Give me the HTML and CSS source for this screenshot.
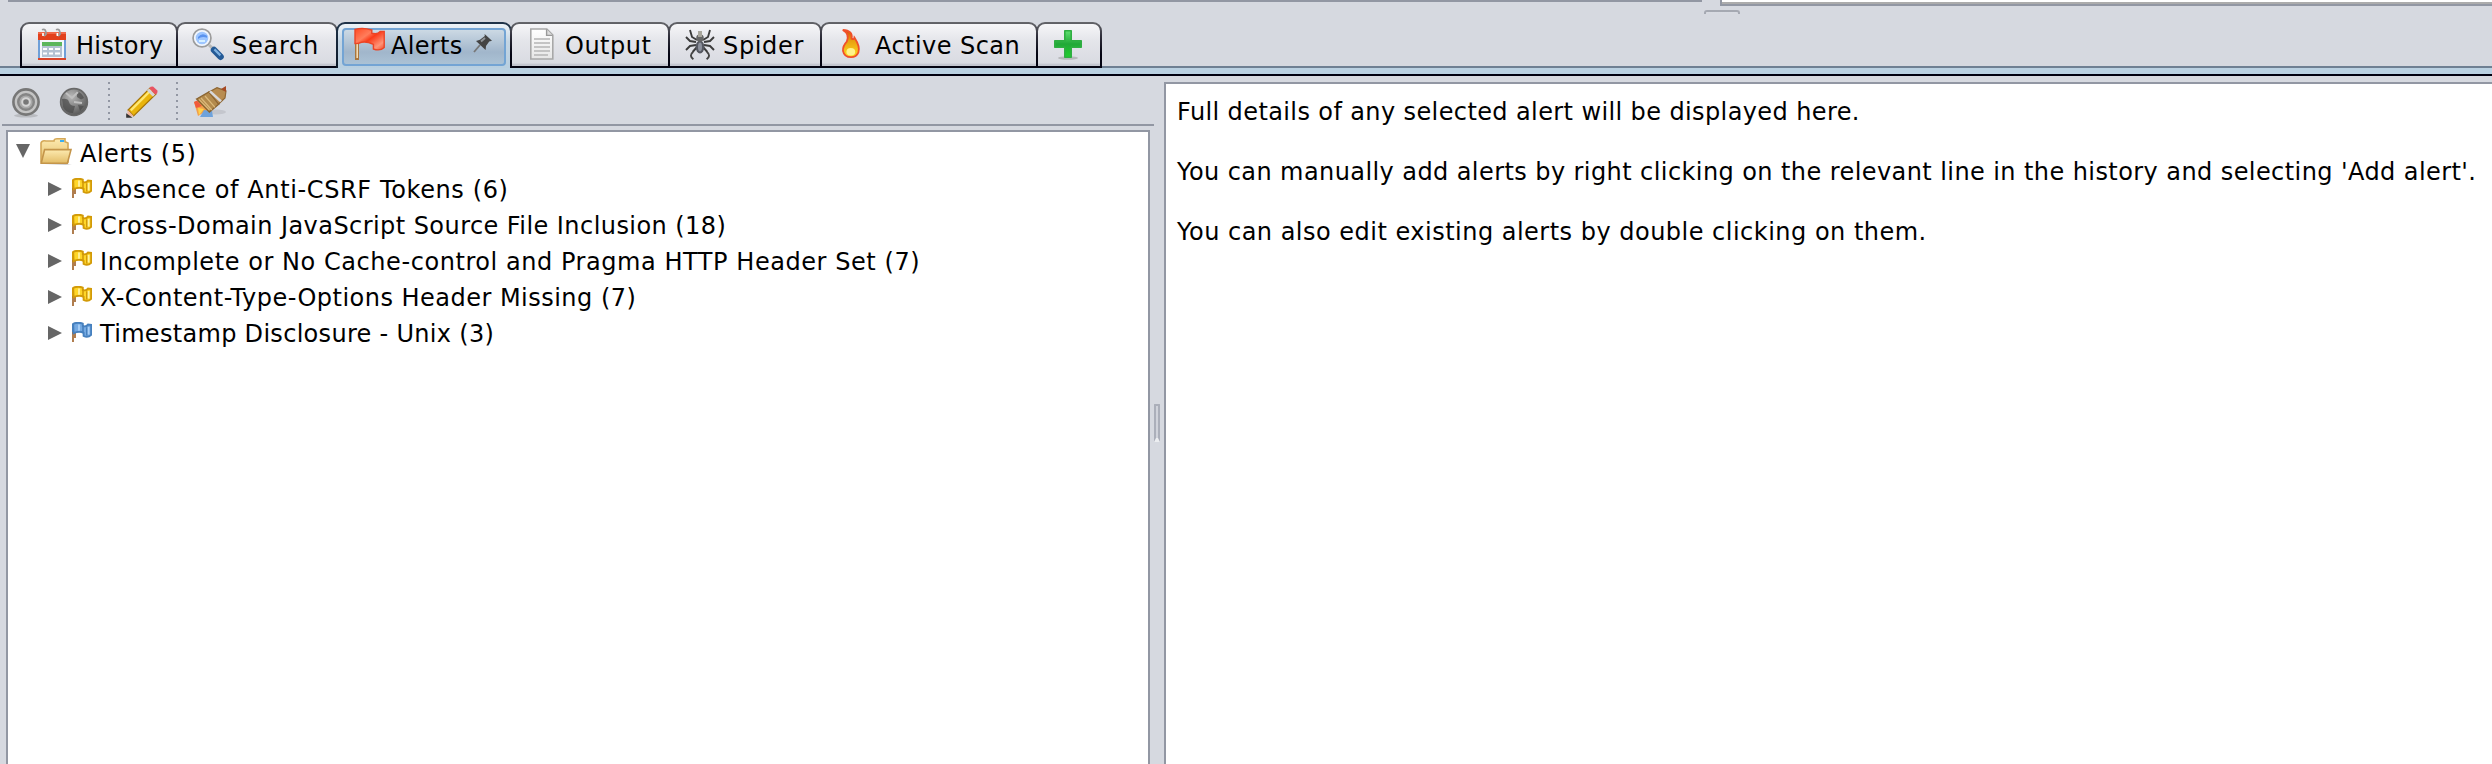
FILE: index.html
```html
<!DOCTYPE html>
<html lang="en">
<head>
<meta charset="utf-8">
<title>Alerts</title>
<link rel="stylesheet" href="styles.css">
</head>
<body>
<svg class="defs" aria-hidden="true">
  <defs>
    <linearGradient id="red" x1="0" y1="0" x2="1" y2="1"><stop offset="0" stop-color="#ff4a22"/><stop offset=".35" stop-color="#ff7d5c"/><stop offset=".5" stop-color="#fa3c1a"/><stop offset=".8" stop-color="#ff9478"/><stop offset="1" stop-color="#f04a28"/></linearGradient>
    <linearGradient id="fold" x1="0" y1="0" x2="0" y2="1"><stop offset="0" stop-color="#fdeab0"/><stop offset="1" stop-color="#e3bd68"/></linearGradient>
    <linearGradient id="flame" x1="0" y1="0" x2="0" y2="1"><stop offset="0" stop-color="#d84a08"/><stop offset=".4" stop-color="#e8a010"/><stop offset="1" stop-color="#ffdc20"/></linearGradient>
    <linearGradient id="green" x1="0" y1="0" x2="0" y2="1"><stop offset="0" stop-color="#5fe070"/><stop offset=".5" stop-color="#22a838"/><stop offset="1" stop-color="#1fd02c"/></linearGradient>
    <linearGradient id="page" x1="0" y1="0" x2="0" y2="1"><stop offset="0" stop-color="#fff"/><stop offset="1" stop-color="#e6e6e6"/></linearGradient>
    <radialGradient id="globe" cx=".4" cy=".3" r=".7"><stop offset="0" stop-color="#b8b8b8"/><stop offset="1" stop-color="#5a5a5a"/></radialGradient>
    <symbol id="flag" viewBox="0 0 10 10">
      <path d="M.5 1v5" stroke="var(--edge)"/>
      <path d="M.5 5v5M1.500 5v3" stroke="#a8703c" stroke-width=".9"/>
      <path d="M.6.9Q3-.1 5.400.8V2q1.600.6 2.600-.7l1.600.1V6.400Q8 8 5.800 7V5.400Q3.500 4.300.8 5.600z" fill="var(--lite)" stroke="var(--edge)" stroke-width=".95"/>
      <path d="M5.500 1.500V5.600M7.400 2.600V6.700" stroke="var(--edge)" stroke-width=".8"/>
      <path d="M3.500 1.200v3.200M8.300 2.500v3.700" stroke="var(--mid)" stroke-width=".9"/>
    </symbol>
  </defs>
</svg>
<div class="window">
  <div class="upper">
    <div class="upper-left"></div>
    <div class="upper-grip"></div>
    <div class="upper-right"></div>
  </div>

  <nav class="tabs">
    <div class="tab history">
      <svg class="icon" viewBox="0 0 16 16"><path d="M1 3h14v13H1z" fill="#6f9fd8"/><path d="M2 6h12v9H2z" fill="#f4f7fb"/><path d="M1 2h14v4H1z" fill="#e2401c"/><path d="M1 2h14v1H1z" fill="#f0694a"/><path d="M1 15h14v1H1z" fill="#d9452a"/><path d="M3 7h10v7.500H3z" fill="#b4c2d2"/><path d="M3 7h10v2H3z" fill="#5cb65c"/><path d="M3.500 10h2v1h-2zm3 0h2v1h-2zm3 0h2.500v1H9.500zM3.500 12.200h2v1h-2zm3 0h2v1h-2zm3 0h2.500v1H9.500z" fill="#fff"/><path d="M3 .9q2-1 2 2.200q-1 1.400-1.600-.2M10 .9q2-1 2 2.200q-1 1.400-1.600-.2" fill="none" stroke="#999" stroke-width=".9"/><path d="M3.500 2.500v1.500M10.700 2.500v1.500" stroke="#fff" stroke-width=".8"/></svg>
      <span>History</span>
    </div>
    <div class="tab search">
      <svg class="icon" viewBox="0 0 16 16"><path d="m8.500 8.500 2.500 2.300" stroke="#b9b9b9" stroke-width="1.500"/><path d="m11 11 3.300 3.400" stroke="#245a96" stroke-width="3.200" stroke-linecap="round"/><path d="m11.200 10.700 3 3" stroke="#7db0e0" stroke-width="1.100"/><circle cx="5" cy="5" r="4.400" fill="#a9cbfb" stroke="#9c9c9c"/><circle cx="5" cy="5" r="3.600" fill="#9ec6ff" stroke="#f2f6fc" stroke-width=".9"/><path d="M3 4.500q2-2.400 4.500-.6v1Q5 3.800 3 5.500z" fill="#5a92ee"/><path d="M3.500 6.500h3" stroke="#d6f0ff"/></svg>
      <span>Search</span>
    </div>
    <div class="tab alerts active">
      <div class="focus">
        <svg class="icon" viewBox="0 0 16 16"><path d="M1 5h2v11H1z" fill="#a9753c"/><path d="M1.700 6h.8v9h-.8z" fill="#f3dcb4"/><path d="M1 .7Q5-.3 9.400 1v1.600q3 .8 4.200-.9h2v8q-2 2-5.400.8V8.200Q6 6.200 3 7.600L1 7.800z" fill="url(#red)" stroke="#ec4425" stroke-width=".7"/></svg>
        <span>Alerts</span>
        <svg class="pin" viewBox="0 0 9 9"><path d="M0 9 3 5.500" stroke="#777" stroke-width=".9"/><path d="m1 3.500 2-.6L5.400 1 5.300 0 9 3.400 7.600 3.700 6 6l-.2 2z" fill="#444"/><path d="m3.500 3.700 2-1.700" stroke="#909498"/></svg>
      </div>
    </div>
    <div class="tab output">
      <svg class="icon" viewBox="0 0 16 16"><path d="M2.400.5h8l3 3v12h-11z" fill="url(#page)" stroke="#a8a8a8" stroke-width=".8"/><path d="M10.300.6v3.100h3" fill="#ddd" stroke="#999" stroke-width=".7"/><path d="M4 5.500h8M4 7.500h8M4 9.500h8M4 11.500h8M4 13.500h7" stroke="#b5b5b5" stroke-width=".8"/></svg>
      <span>Output</span>
    </div>
    <div class="tab spider">
      <svg class="icon" viewBox="0 0 16 16"><path d="M6.500 6 4 4.500 3 1M6 7 3 6.500 1 4.500M6 8.500 3 9 1 11M6.500 9.500 4.300 12M9.500 6 12 4.500 13 1M10 7l3-.5 2-2M10 8.500 13 9l2 2M9.500 9.500 11.700 12" fill="none" stroke="#3c3c3c" stroke-width=".95"/><path d="M4.500 12q-2.200 1.800.2 3.600M11.500 12q2.200 1.800-.2 3.600" fill="none" stroke="#444" stroke-width=".95"/><ellipse cx="8" cy="9.500" rx="2.200" ry="3.200" fill="#555861"/><ellipse cx="8" cy="9.500" rx="1" ry="2.200" fill="#8c909c"/><circle cx="8" cy="5" r="1.900" fill="#666"/><path d="M7 1.500h2v3H7z" fill="#a8a69c"/></svg>
      <span>Spider</span>
    </div>
    <div class="tab scan">
      <svg class="icon" viewBox="0 0 16 16"><path d="M3.400 1q5.200.3 4.400 4.300Q9 6 9.200 4.800q3 4.600 2 7.400-1 2.400-3.600 2.400-3.500 0-4.100-3.200-.2-2.400 1.900-4.600Q7 3 3.400 1z" fill="url(#flame)" stroke="#f0502a" stroke-width=".9"/><ellipse cx="7.400" cy="11.900" rx="2.200" ry="1.900" fill="#fff38c"/></svg>
      <span>Active Scan</span>
    </div>
    <div class="tab add">
      <svg class="icon" viewBox="0 0 16 16"><ellipse cx="8" cy="15" rx="5" ry=".9" fill="#b7b8bb"/><path d="M6.400 1.400h3.200v5h5v3.200h-5v5H6.400v-5h-5V6.400h5z" fill="url(#green)" stroke="#2fae42" stroke-width=".8" stroke-linejoin="round"/></svg>
    </div>
  </nav>
  <div class="band"></div>

  <main class="split">
    <section class="left">
      <div class="toolbar">
        <svg class="icon target" viewBox="0 0 16 16"><ellipse cx="8" cy="14.800" rx="6" ry="1" fill="#b9bbc0"/><circle cx="8" cy="8" r="6.300" fill="#c4c4c4" stroke="#777" stroke-width="1.300"/><circle cx="8" cy="8" r="3.900" fill="#a8a8a8" stroke="#858585" stroke-width="1.200"/><circle cx="8" cy="8" r="1.900" fill="#777" stroke="#d4d4d4"/></svg>
        <svg class="icon globe" viewBox="0 0 16 16"><circle cx="8" cy="8" r="6.700" fill="url(#globe)" stroke="#686868" stroke-width=".8"/><path d="M2 6.500q3-.5 3.500 1.500T8.500 10l-1 3.500q-3.500 0-5-3zM9.500 2.500q2.500 1 3.500 3.500l-1.500.7L9.500 5.500zM10 9.500l3 .5-2 2.500z" fill="#4a4a4a" opacity=".7"/><path d="M4 3.500 7 6l3-3M8 8l4 .5" stroke="#c0c0c0" fill="none"/></svg>
        <i class="sep"></i>
        <svg class="icon pencil" viewBox="0 0 16 16"><path d="m1 12 2.800 3L15 4l-3-3z" fill="#e9b40c" stroke="#a57408" stroke-width=".6"/><path d="M2 11.800 12.200 1.600l.8.800L2.800 12.600z" fill="#ffe873"/><path d="m11 1.800 3 3" stroke="#d5d5d5" stroke-width="1.500"/><path d="m12.300.4 1.200-.2 2.300 2.200-.2 1.200-1 .6-2.900-2.900z" fill="#e85462"/><path d="M.3 15.700.9 12l2.900 3z" fill="#f0b8a0"/><path d="M.1 13.600v2.300h3.200z" fill="#333"/></svg>
        <i class="sep"></i>
        <svg class="icon broom" viewBox="0 0 16 16"><ellipse cx="11" cy="13" rx="5" ry="1.200" fill="#c4c6cd"/><path d="m0 8 3-1 4 5-5 3z" fill="#f2a04a"/><path d="m0 8 1.500-.8L4 10l-3 1z" fill="#f05a3c"/><path d="m3 15.500 2-3.500 4 .5.500 3z" fill="#6ea2dc"/><path d="m2 11 3 .5-2.500 3z" fill="#ffd24a"/><path d="M1.300 6.500 7.500 3l5 6-4.800 4z" fill="#b38a4c" stroke="#8a6430" stroke-width=".7"/><path d="m3.500 6 5.400 6M5.500 5l5 5.700M2.500 6.700 7.700 12" stroke="#dcb97a" stroke-width=".6"/><path d="m7.500 3 4-2.200L16 2.500 15.500 6l-3.200 3z" fill="#b88c50" stroke="#8e6734" stroke-width=".6"/><path d="m8 2.700 5.500 5" stroke="#d8d8dc" stroke-width="1.300"/><path d="M13.500 1.500 16 0v3z" fill="#a64a24"/></svg>
      </div>
      <div class="tree">
        <div class="row root"><svg class="arrow down" viewBox="0 0 14 14"><path d="M0 0h14L7 14z"/></svg>
          <svg class="folder" viewBox="0 0 16 14"><path d="m13 13 3 .5H2z" fill="#ccc"/><path d="M.5 2.500Q1 1 3 1.500h4Q7 .2 9 .4h3.500v1.500L14 2.500V12H.5z" fill="url(#fold)" stroke="#d4a858" stroke-width=".8"/><path d="M10 1h2v1h-2z" fill="#3aaef0"/><path d="M2.300 5.800h13.200L13.700 12.600H.6z" fill="url(#fold)" stroke="#c4954a" stroke-width=".8"/></svg>
          <span class="t-root">Alerts (5)</span></div>
        <div class="row"><svg class="arrow" viewBox="0 0 14 14"><path d="M0 0v14l14-7z"/></svg><svg class="flag yellow"><use href="#flag"/></svg><span class="t-csrf">Absence of Anti-CSRF Tokens (6)</span></div>
        <div class="row"><svg class="arrow" viewBox="0 0 14 14"><path d="M0 0v14l14-7z"/></svg><svg class="flag yellow"><use href="#flag"/></svg><span class="t-cross">Cross-Domain JavaScript Source File Inclusion (18)</span></div>
        <div class="row"><svg class="arrow" viewBox="0 0 14 14"><path d="M0 0v14l14-7z"/></svg><svg class="flag yellow"><use href="#flag"/></svg><span class="t-cache">Incomplete or No Cache-control and Pragma HTTP Header Set (7)</span></div>
        <div class="row"><svg class="arrow" viewBox="0 0 14 14"><path d="M0 0v14l14-7z"/></svg><svg class="flag yellow"><use href="#flag"/></svg><span class="t-type">X-Content-Type-Options Header Missing (7)</span></div>
        <div class="row"><svg class="arrow" viewBox="0 0 14 14"><path d="M0 0v14l14-7z"/></svg><svg class="flag blue"><use href="#flag"/></svg><span class="t-time">Timestamp Disclosure - Unix (3)</span></div>
      </div>
    </section>
    <div class="divider"><div class="grip"></div></div>
    <section class="details">
      <p class="intro">Full details of any selected alert will be displayed here.</p>
      <p class="manual">You can manually add alerts by right clicking on the relevant line in the history and selecting 'Add alert'.</p>
      <p class="edit">You can also edit existing alerts by double clicking on them.</p>
    </section>
  </main>
</div>
</body>
</html>
```
FILE: styles.css
```css
* { box-sizing: border-box; }
body { margin: 0; background: #d6d9e0; color: #000; font: 24px/36px "DejaVu Sans", sans-serif; }
.defs { position: absolute; width: 0; height: 0; }
svg { display: block; flex: none; overflow: visible; }
span, p { white-space: nowrap; }
.window { display: flex; flex-direction: column; width: 2492px; height: 764px; overflow: hidden; }

.upper { display: flex; height: 22px; flex: none; padding-left: 8px; }
.upper-left { width: 1694px; border-top: 2px solid #9297a3; }
.upper-grip { width: 36px; height: 6px; margin: 10px -20px 0 2px; border: 2px solid #a5a9b2; border-bottom: 0; border-radius: 3px 3px 0 0; background: linear-gradient(#d8dbe2, #d6d9e0); clip-path: inset(0 0 2px 0); }
.upper-right { flex: 1; height: 6px; border: solid #9297a3; border-width: 0 0 2px 2px; background: linear-gradient(#fff 2px, #acacac 2px); }

.tabs { display: flex; height: 46px; flex: none; padding-left: 20px; background: linear-gradient(#6f8093, #6f8093) bottom / 100% 2px no-repeat; }
.tab { display: flex; height: 46px; margin-right: -2px; border: 2px solid transparent; border-radius: 9px 9px 0 0; line-height: 44px;
  background: linear-gradient(#f6f6f8, #e4e5ea 40%, #d9dbe2 93%, #c4c7d0 96%) padding-box, linear-gradient(#66676b, #30303c 30%, #040412 70%) border-box; }
.icon { width: 32px; height: 32px; margin-top: 4px; }
.history { width: 158px; padding-left: 14px; gap: 8px; letter-spacing: .3px; }
.search { width: 162px; padding-left: 14px; gap: 8px; letter-spacing: .75px; }
.alerts { width: 176px; padding: 4px 4px 0; letter-spacing: .3px; }
.output { width: 160px; padding-left: 14px; gap: 7px; letter-spacing: .5px; }
.spider { width: 154px; padding-left: 14px; gap: 7px; letter-spacing: .65px; }
.scan { width: 218px; padding-left: 14px; gap: 7px; letter-spacing: .45px; }
.add { width: 66px; padding-left: 14px; }
.tab.active { border-bottom: 0; background: linear-gradient(#edf3f8, #c4d5e3 40%, #b8cfe0) padding-box, linear-gradient(#20344a, #0a1626) border-box; }
.focus { display: flex; width: 164px; height: 38px; padding-left: 9px; border: 2px solid #73a4d4; border-radius: 4px; background: linear-gradient(#ccd9e4, #a1b6cb 65%, #abc2d5); line-height: 36px; }
.focus .icon { margin-top: -2px; }
.focus span { height: 36px; margin: -2px 12px 0 6px; }
.pin { width: 18px; height: 18px; margin-top: 4px; }
.band { height: 8px; flex: none; background: #bad1e2; border-bottom: 2px solid #000010; }

.split { display: flex; flex: 1; min-height: 0; }
.left { display: flex; flex-direction: column; width: 1154px; padding-left: 2px; }
.toolbar { display: flex; height: 50px; flex: none; padding: 6px 0 0 8px; border-bottom: 2px solid #9297a3; }
.globe { margin-left: 16px; }
.sep { width: 2px; height: 38px; margin-left: 18px; background: repeating-linear-gradient(#9297a3 0 2px, transparent 2px 6px); }
.pencil { margin-left: 16px; }
.broom { margin-left: 16px; }
.toolbar svg.icon { margin-top: 4px; }
.tree { flex: 1; width: 1144px; margin: 4px 0 0 4px; padding-top: 4px; border: 2px solid #9297a3; border-bottom: 0; background: #fff; }
.row { display: flex; height: 36px; padding-left: 40px; }
.row.root { padding-left: 8px; }
.t-root { letter-spacing: .5px; }
.t-csrf { letter-spacing: .62px; }
.t-cross { letter-spacing: .44px; }
.t-cache { letter-spacing: .56px; }
.t-type { letter-spacing: .48px; }
.t-time { letter-spacing: .3px; }
.arrow { width: 14px; height: 14px; margin-top: 10px; fill: #666; }
.down { margin-top: 8px; }
.folder { width: 32px; height: 28px; margin: 2px 8px 0 10px; }
.flag { width: 20px; height: 20px; margin: 6px 8px 0 10px; }
.yellow { --lite: #ffd628; --mid: #fff2a0; --edge: #d29a08; }
.blue { --lite: #74a9e2; --mid: #a9d0f8; --edge: #4680be; }
.divider { width: 10px; }
.grip { width: 6px; height: 38px; margin-top: 328px; border: 2px solid #abafba; border-bottom: 4px solid #eceef1; border-radius: 1px; background: #d0d3db; }
.details { flex: 1; margin-top: 6px; padding: 13px 0 0 11px; border: solid #9297a3; border-width: 2px 0 0 2px; background: #fff; line-height: 30px; }
p { margin: 0 0 30px; }
.intro { letter-spacing: .39px; }
.manual { letter-spacing: .42px; }
.edit { letter-spacing: .49px; }
```
